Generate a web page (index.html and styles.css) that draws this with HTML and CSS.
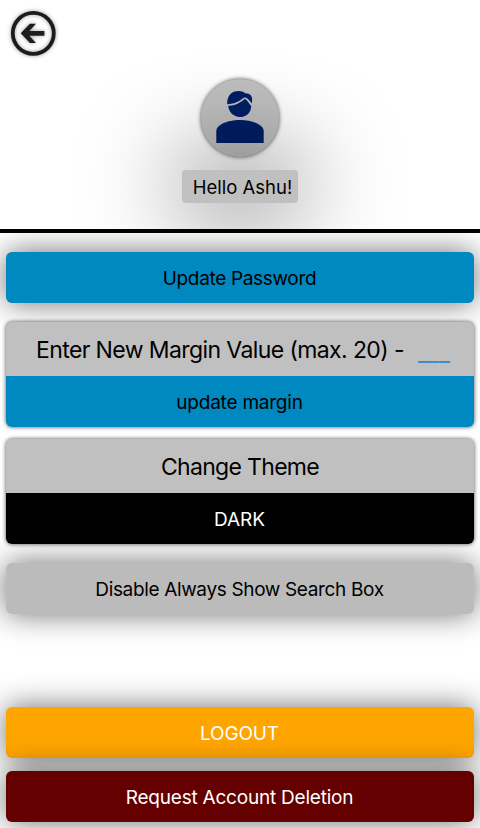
FILE: index.html
```html
<!DOCTYPE html>
<html lang="en">
<head>
<meta charset="utf-8">
<title>Account</title>
<link rel="stylesheet" href="styles.css">
</head>
<body>
<header class="profile">
  <a class="back" href="#" aria-label="Back">
    <svg width="60" height="60" viewBox="0 0 60 60">
      <circle cx="33.3" cy="33.3" r="20.5" fill="none" stroke="#1c1c1c" stroke-width="3.8"/>
      <path d="M20.7 33.3 29.9 23.8H36L29.3 30.9H44.4V35.7H29.3L36 43H29.9Z" fill="#1c1c1c"/>
    </svg>
  </a>
  <div class="avatar">
    <svg width="78" height="78" viewBox="0 0 78 78" fill="#001f66">
      <path d="M15.3 64V52C15.3 46 26 41 39 41s23.700 5 23.700 11V64Z"/>
      <path d="M26.200 25.300C26 16 31 12 37.500 12c3 0 5 .8 6.600 2.300 5.500-.2 8.400 3.500 6.500 10.200-2-3-4.300-5.800-6.500-6-3 .3-5.600 6-17.900 6.800Z"/>
      <path d="M27.300 26.800C38 26.300 41.500 21 44 20c1.800.6 4 4.600 6.200 6.900C50 34 45 38 38.800 38S27.500 33 27.300 26.800Z"/>
    </svg>
  </div>
  <div class="greeting">Hello Ashu!</div>
</header>
<main class="settings">
  <button class="btn blue password"><span class="t-password">Update Password</span></button>
  <section class="card margin-card">
    <div class="card-title margin-title"><span class="t-margin">Enter New Margin Value (max. 20) -</span><span class="field">___</span></div>
    <button class="card-action blue"><span class="t-update">update margin</span></button>
  </section>
  <section class="card theme-card">
    <div class="card-title"><span class="t-theme">Change Theme</span></div>
    <button class="card-action dark"><span class="t-dark">DARK</span></button>
  </section>
  <button class="btn search"><span class="t-search">Disable Always Show Search Box</span></button>
  <footer class="account">
    <button class="btn logout"><span class="t-logout">LOGOUT</span></button>
    <button class="btn delete"><span class="t-delete">Request Account Deletion</span></button>
  </footer>
</main>
</body>
</html>
```
FILE: styles.css
```css
* { box-sizing: border-box; }
body {
  margin: 0;
  height: 828px;
  overflow: hidden;
  display: flex;
  flex-direction: column;
  background: #fff;
  color: #000;
  font-family: Inter, "Liberation Sans", sans-serif;
}
button {
  border: 0;
  padding: 2px 1px 0 0;
  font: inherit;
  color: inherit;
  display: flex;
  align-items: center;
  justify-content: center;
}
span { white-space: nowrap; }
.profile {
  position: relative;
  height: 233px;
  flex: none;
  padding-top: 79px;
  border-bottom: 4px solid #000;
  overflow: hidden;
  display: flex;
  flex-direction: column;
  align-items: center;
}
.back {
  position: absolute;
  left: 0;
  top: 0;
  filter: drop-shadow(0 0 2px rgba(0, 0, 0, .4));
}
.back svg, .avatar svg { display: block; }
.avatar {
  width: 78px;
  height: 78px;
  border-radius: 50%;
  background: #c0c0c0;
  box-shadow: 0 0 4px rgba(0, 0, 0, .7);
}
.greeting {
  position: relative;
  width: 116px;
  height: 33px;
  margin-top: 13px;
  padding-left: 5px;
  border-radius: 4px;
  background: #c0c0c0;
  box-shadow: 0 0 100px #000;
  font-size: 18.500px;
  line-height: 34px;
  text-align: center;
  white-space: nowrap;
}
.settings {
  flex: 1;
  min-height: 0;
  overflow: hidden;
  padding: 19px 6px 6px;
  display: flex;
  flex-direction: column;
}
.btn {
  width: 100%;
  height: 51px;
  flex: none;
  border-radius: 6px;
  box-shadow: 0 0 30px rgba(0, 0, 0, .57);
  font-size: 19px;
}
.blue { background: #0088c0; }
.card {
  flex: none;
  height: 105px;
  border-radius: 6px;
  background: #c0c0c0;
  box-shadow: 0 0 4px rgba(0, 0, 0, .7);
  overflow: hidden;
}
.margin-card { margin-top: 19px; }
.theme-card { margin-top: 12px; }
.card-title {
  height: 54px;
  display: flex;
  align-items: center;
  justify-content: center;
  gap: 14px;
  padding-top: 2px;
  font-size: 23px;
}
.margin-title { padding-left: 6px; }
.t-margin { letter-spacing: -.6px; }
.t-theme { letter-spacing: -.68px; }
.t-password { letter-spacing: -.33px; }
.t-update { letter-spacing: -.22px; }
.t-search { letter-spacing: -.35px; }
.t-logout { letter-spacing: -.15px; }
.t-delete { letter-spacing: -.22px; }
.field { color: #428bca; font-size: 23.500px; padding-top: 4px; }
.card-action { width: 100%; height: 51px; font-size: 19px; }
.dark { background: #000; color: #fff; }
.search { margin-top: 19px; background: #bbb; }
.account { margin-top: auto; display: flex; flex-direction: column; gap: 13px; }
.logout { background: #ffa500; color: #fff; }
.delete { background: #640000; color: #fff; }
```
